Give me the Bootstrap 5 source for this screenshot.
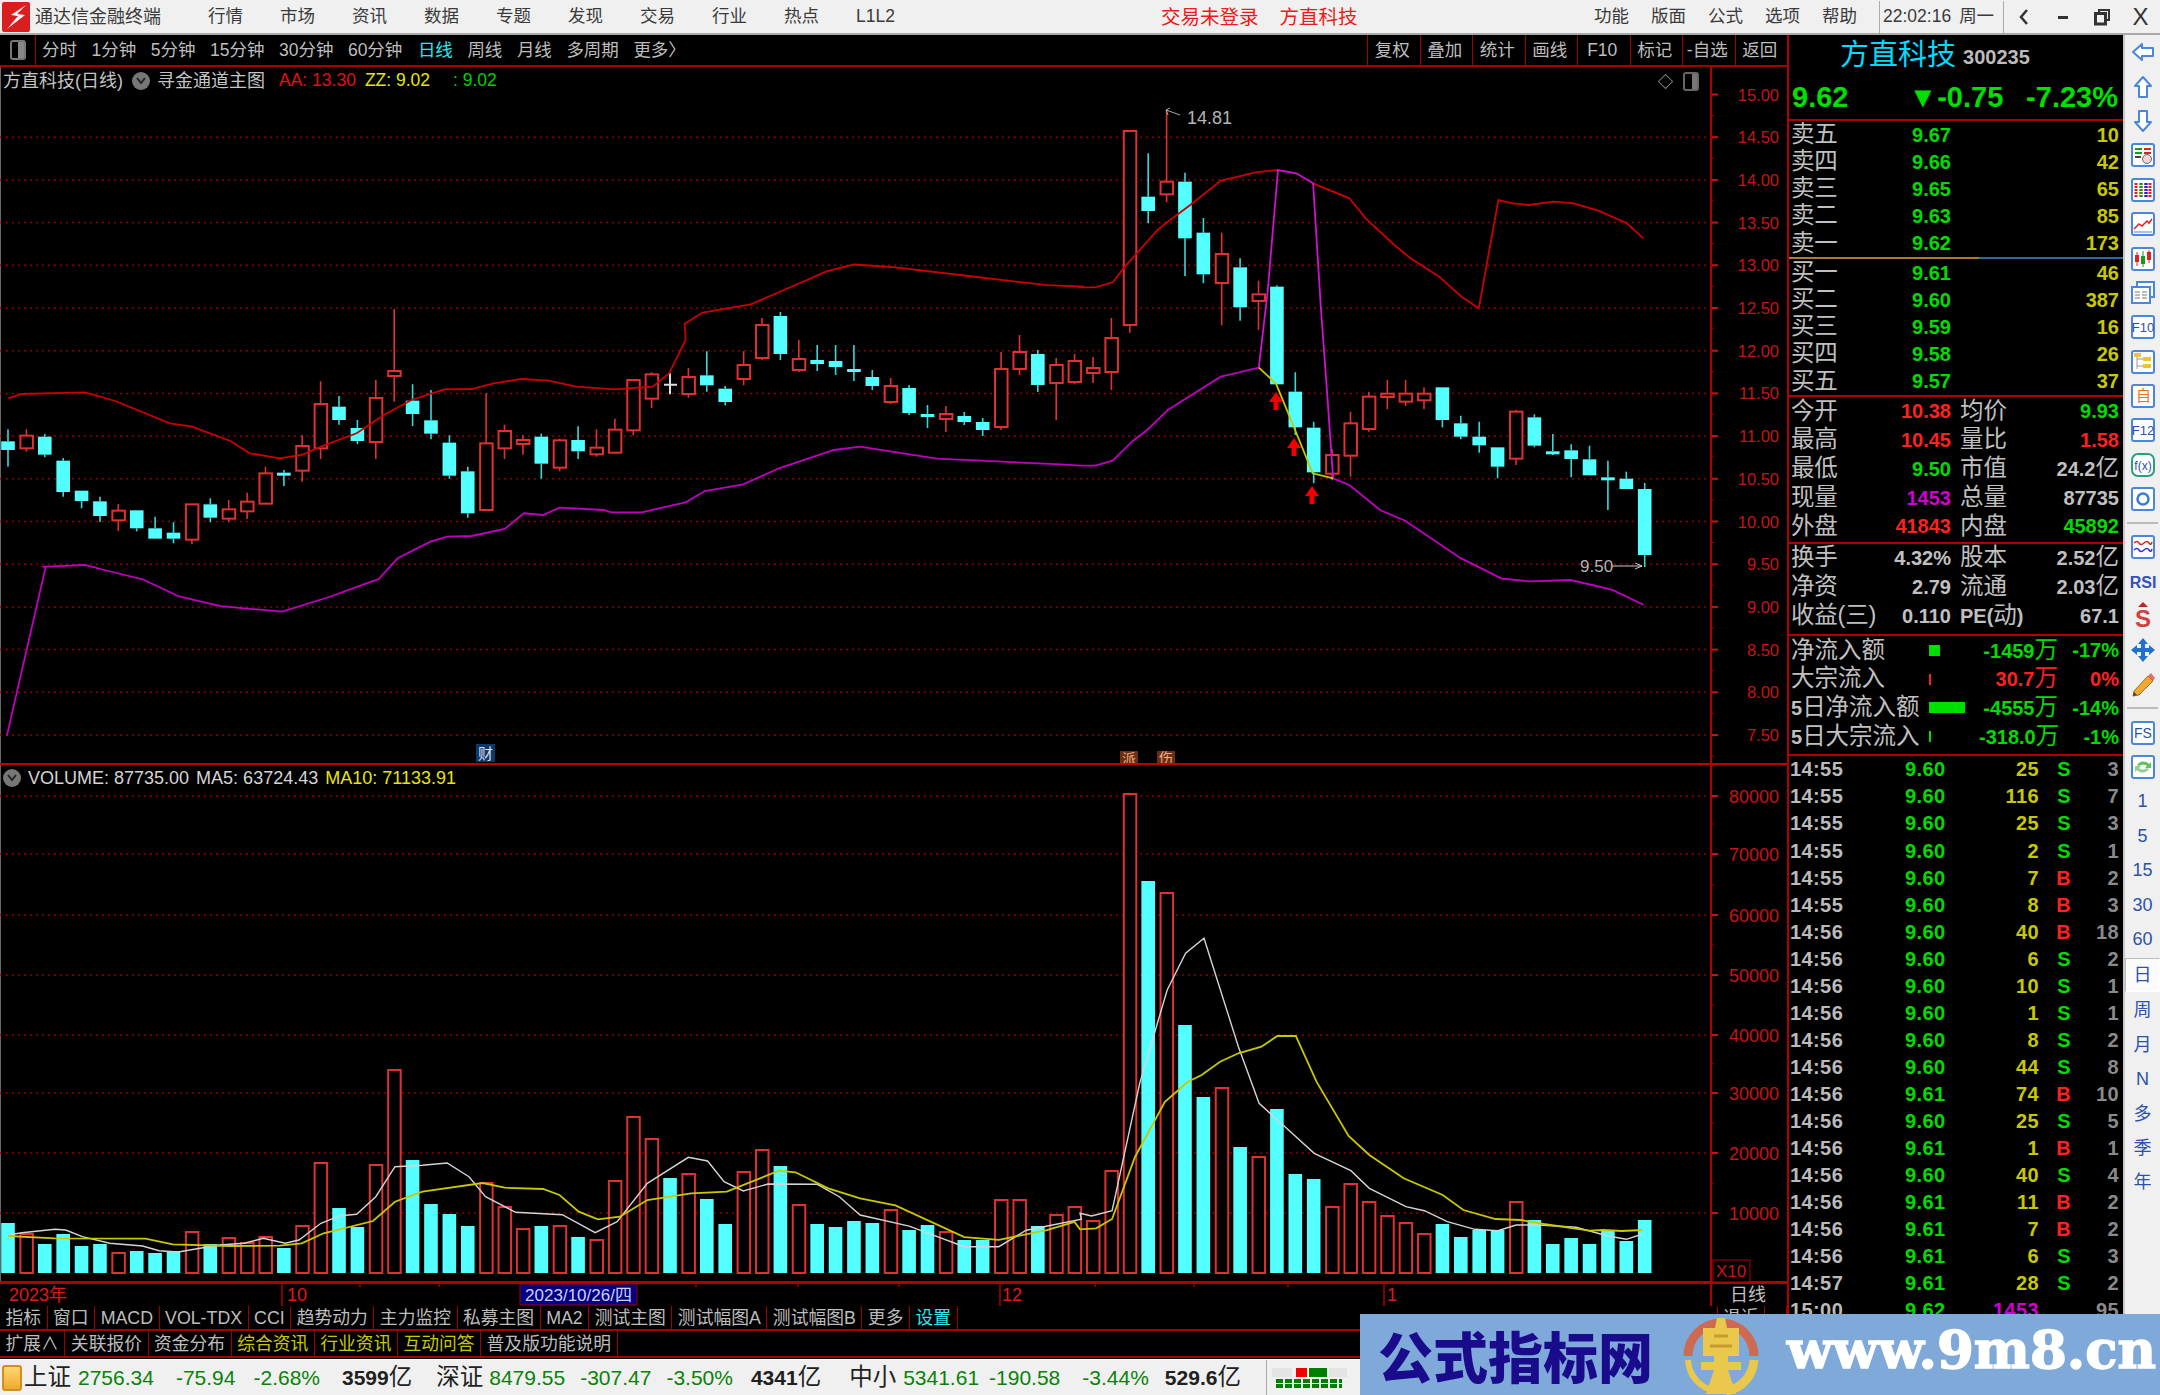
<!doctype html>
<html lang="zh-CN">
<head>
<meta charset="utf-8">
<title>通达信金融终端</title>
<link href="https://cdn.jsdelivr.net/npm/bootstrap@5.3.0/dist/css/bootstrap.min.css" rel="stylesheet">
<style>
  html, body { margin: 0; background: #000; overflow: hidden; }
  body { font-family: "Liberation Sans", "Noto Sans CJK SC", sans-serif; font-size: 17.5px; line-height: 1; }
  .screen { width: 2160px; height: 1395px; position: relative; overflow: hidden; }

  /* title bar */
  .titlebar { height: 35px; padding-top: 1px; background: #f0f0f0; border-bottom: 2px solid #a8a8a8; color: #3a3a3a; font-size: 17.5px; }
  .app-logo { width: 28px; height: 30px; margin: 0 5px 0 2px; }
  .app-name { width: 173px; font-size: 18px; }
  .menu-main span { width: 72px; }
  .menu-red { color: #f01818; position: absolute; left: 1161px; top: 8px; font-size: 19.5px; }
  .menu-red span + span { margin-left: 21px; }
  .menu-right { margin-left: auto; }
  .menu-right span { width: 57px; }
  .clock { border-left: 1px solid #aaa; border-right: 1px solid #aaa; height: 32px; width: 125px; padding-left: 3px; gap: 8px; }
  .win-btns { width: 156px; color: #333; }
  .win-btns span { width: 39px; display: flex; justify-content: center; }
  .win-x { font-size: 24px; }

  /* period bar */
  .leftcol { width: 1787px; }
  .periodbar { height: 32px; border-bottom: 2px solid #a00000; color: #bdbdbd; }
  .period-toggle { width: 36px; height: 30px; border-right: 1px solid #a00000; }
  .period-toggle i { display: block; width: 16px; height: 20px; border: 2px solid #777; border-radius: 3px; background: linear-gradient(90deg, #000 50%, #888 50%); }
  .period-items { gap: 14.5px; margin-left: 6px; padding-top: 1px; }
  .period-on { color: #2ee6f0; margin-left: 1px; }
  .period-btn { width: 52.5px; height: 30px; padding: 1px 3px 0 0; border-left: 1px solid #a00000; }

  /* chart */
  .chartwrap { position: relative; height: 1239px; }
  .chartwrap svg { display: block; }
  .legend { position: absolute; left: 3px; gap: 7px; color: #c4c4c4; white-space: nowrap; font-size: 18px; }
  .legend-price { top: 5px; }
  .legend-vol { top: 702px; color: #d4d4d4; }
  .dot { width: 18px; height: 18px; border-radius: 50%; background: #777; }
  .legend-price .dot { margin-left: 2px; }
  .t-red { color: #e01010; font-size: 17.5px; margin-left: 7px; }
  .t-yel { color: #e6e600; font-size: 17.5px; margin-left: 2px; }
  .t-grn { color: #00d000; font-size: 17.5px; margin-left: 16px; }
  .legend-vol .t-yel { font-size: 18px; margin-left: 0; }
  .pane-tools { position: absolute; top: 5px; left: 1660px; gap: 12px; color: #777; }
  .pane-tools b { display: block; width: 16px; height: 19px; border: 2px solid #666; border-radius: 3px; background: linear-gradient(90deg, #000 55%, #777 55%); }
  .diamond { width: 11px; height: 11px; margin-top: 4px; border: 1px solid #777; transform: rotate(45deg); }

  /* button rows */
  .btnrow { border-bottom: 2px solid #a00000; color: #bdbdbd; overflow: hidden; font-size: 17.8px; }
  .btnrow-a { height: 25px; }
  .btnrow-b { height: 27px; }
  .btnrow span { padding: 2px 5.5px 0; border-right: 1px solid #a00000; display: flex; align-items: center; white-space: nowrap; }
  .btnrow .cell-edge { border-left: 1px solid #a00000; }
  .c-yellow { color: #c8c800; }
  .c-cyan { color: #2ee6f0; }

  /* quote panel */
  .quote { width: 336px; height: 1324px; border-left: 2px solid #b00000; color: #c0c0c0; overflow: hidden; font-weight: 700; font-size: 20px; }
  .q-head { height: 86px; border-bottom: 2px solid #b00000; }
  .q-name { height: 48px; padding-left: 51px; padding-top: 6px; gap: 7px; font-weight: 400; }
  .q-name b { color: #00dcff; font-size: 29px; font-weight: 400; }
  .q-name i { font-style: normal; font-size: 20px; font-weight: 700; color: #bbb; padding-top: 6px; }
  .q-now { color: #00e000; font-size: 29px; padding: 0 5px 0 3px; }
  .q-now span:nth-child(2) { margin-left: 60px; }
  .q-now span:nth-child(3) { margin-left: auto; }
  .q-split { height: 2px; background: linear-gradient(90deg, #b07a28 57%, #2b6aa8 57%); }
  .q-rule { height: 1px; border-bottom: 2px solid #b00000; }
  .q-stats { border-bottom: 2px solid #b00000; }
  .pad-a { padding-bottom: 1px; }
  .pad-b { padding-bottom: 4px; }
  .pad-c { padding-bottom: 3px; }
  .qrow { display: flex; align-items: center; padding: 0 4px 0 2px; height: 27.2px; white-space: nowrap; }
  .qrow-tall { height: 28.75px; }
  .cj { font-weight: 400; font-size: 23.5px; }
  .q-lab { width: 80px; font-weight: 400; font-size: 23.5px; letter-spacing: -.2px; }
  .q-val { width: 80px; text-align: right; }
  .q-lab2 { margin-left: 9px; font-weight: 400; font-size: 23.5px; width: 60px; white-space: nowrap; }
  .q-lab2.q-pe { font-weight: 700; font-size: 20px; }
  .q-end { flex-grow: 1; text-align: right; }
  .g { color: #00dc00; } .y { color: #c8c800; } .r { color: #ff2020; } .p { color: #d000d0; } .w { color: #c0c0c0; }
  .f-lab { width: 138px; font-weight: 400; font-size: 23.5px; }
  .f-lab em { font-style: normal; font-weight: 700; font-size: 20px; }
  .f-bar { width: 50px; display: flex; align-items: center; }
  .f-bar i { display: block; height: 11px; }
  .f-val { width: 79px; text-align: right; }
  .tick { display: flex; align-items: center; height: 27.05px; padding: 0 4px 0 1px; white-space: nowrap; letter-spacing: .4px; }
  .tick-t { width: 115px; color: #bbb; }
  .tick-p { width: 50px; }
  .tick-v { width: 84px; text-align: right; }
  .tick-s { width: 32px; text-align: right; }
  .tick-n { flex-grow: 1; text-align: right; color: #8a8a8a; }

  /* tool strip */
  .toolstrip { width: 37px; height: 1324px; background: #f0f0f0; border-left: 2px solid #c8c8c8; color: #2c52a8; font-size: 17px; }
  .tool { height: 34.4px; display: flex; align-items: center; justify-content: center; }
  .tool svg { display: block; }
  .tool-sep { height: 2px; margin: 5.5px 2px 6px; background: #bbb; }
  .tool-on { background: #fbfbfb; border: 1px solid; border-color: #bbb #fff #fff #bbb; margin: 1.5px 0 1.5px; height: 34px; }
  .tool-cj { font-size: 18px; }

  /* status bar */
  .statusbar { height: 36px; background: #f0f0f0; border-top: 1px solid #fff; color: #202020; font-size: 21px; gap: 18px; padding-left: 2px; white-space: nowrap; }
  .st-icon { width: 20px; height: 26px; border: 2px solid #d09020; border-radius: 3px; background: linear-gradient(180deg, #ffd870, #f0a830); margin-right: -16px; }
  .st-name { font-size: 23.5px; margin-right: -11px; color: #222; }
  .st-g { color: #0a820a; }
  .st-v { font-weight: 700; margin-right: -18px; }
  .st-u { font-size: 23.5px; margin-right: 7px; }
  .st-mini { border-left: 1px solid #aaa; height: 36px; padding: 7px 0 0 5px; }
  .nudge-r4 { margin-left: 4px; }
  .nudge-r3 { margin-left: 3px; }
  .nudge-l1 { margin-left: -1px; }
  .nudge-l2 { margin-left: -2px; }
  .nudge-l3 { margin-left: -3px; }
  .nudge-l8 { margin-left: -8px; }

  /* site stamp lying over the corner */
  .stamp { position: absolute; left: 1360px; top: 1314px; width: 800px; height: 81px; background: #7fa9d8; }
  .stamp-cn { position: absolute; left: 18px; top: 5px; font-size: 55px; line-height: 70px; font-weight: 900; color: #1a0a8c; font-family: "Noto Sans CJK SC", sans-serif; white-space: nowrap; }
  .stamp-logo { position: absolute; left: 316px; top: 0; }
  .stamp-url { position: absolute; left: 427px; top: 4px; font-family: "DejaVu Serif", serif; font-weight: 700; font-size: 53px; line-height: 62px; color: #fff; -webkit-text-stroke: 1.5px #fff; white-space: nowrap; }
</style>
</head>
<body>
<div class="screen d-flex flex-column">

  <div class="titlebar d-flex align-items-center flex-shrink-0">
    <svg class="app-logo" viewBox="0 0 28 30"><rect width="28" height="30" rx="2" fill="#d81e1e"/><path d="M24 3 L9 13 L16 14 L5 27 L23 13 L15 12 Z" fill="#fff"/></svg>
    <span class="app-name">通达信金融终端</span>
    <div class="menu-main d-flex">
      <span>行情</span><span>市场</span><span>资讯</span><span>数据</span><span>专题</span><span>发现</span><span>交易</span><span>行业</span><span>热点</span><span>L1L2</span>
    </div>
    <div class="menu-red"><span>交易未登录</span><span>方直科技</span></div>
    <div class="menu-right d-flex">
      <span>功能</span><span>版面</span><span>公式</span><span>选项</span><span>帮助</span>
    </div>
    <div class="clock d-flex align-items-center"><span>22:02:16</span><span>周一</span></div>
    <div class="win-btns d-flex align-items-center">
      <span><svg width="12" height="18" viewBox="0 0 12 18"><path d="M9 2 L3 9 L9 16" fill="none" stroke="#333" stroke-width="2.500"/></svg></span>
      <span><svg width="12" height="18" viewBox="0 0 12 18"><rect x="1" y="8" width="10" height="3" fill="#333"/></svg></span>
      <span><svg width="16" height="18" viewBox="0 0 16 18"><path d="M5 5V2H15V12H12" fill="none" stroke="#333" stroke-width="2"/><rect x="1.500" y="5.500" width="10" height="10.500" fill="none" stroke="#333" stroke-width="3"/></svg></span>
      <span class="win-x">X</span>
    </div>
  </div>

  <div class="d-flex flex-shrink-0">
    <div class="leftcol flex-shrink-0">
      <div class="periodbar d-flex align-items-center">
        <div class="period-toggle d-flex align-items-center justify-content-center"><i></i></div>
        <div class="period-items d-flex">
          <span>分时</span><span>1分钟</span><span>5分钟</span><span>15分钟</span><span>30分钟</span><span>60分钟</span>
          <span class="period-on">日线</span><span>周线</span><span>月线</span><span>多周期</span><span>更多&#12297;</span>
        </div>
        <div class="ms-auto d-flex">
          <span class="period-btn d-flex align-items-center justify-content-center">复权</span>
          <span class="period-btn d-flex align-items-center justify-content-center">叠加</span>
          <span class="period-btn d-flex align-items-center justify-content-center">统计</span>
          <span class="period-btn d-flex align-items-center justify-content-center">画线</span>
          <span class="period-btn d-flex align-items-center justify-content-center">F10</span>
          <span class="period-btn d-flex align-items-center justify-content-center">标记</span>
          <span class="period-btn d-flex align-items-center justify-content-center">-自选</span>
          <span class="period-btn d-flex align-items-center justify-content-center">返回</span>
        </div>
      </div>

      <div class="chartwrap">
        <svg id="chart" width="1787" height="1239" viewBox="0 67 1787 1239"></svg>
        <div class="legend legend-price d-flex align-items-center">
          <span>方直科技(日线)</span>
          <span class="dot d-flex align-items-center justify-content-center"><svg width="10" height="8" viewBox="0 0 10 8"><path d="M1 1 L5 6 L9 1" fill="none" stroke="#222" stroke-width="2"/></svg></span>
          <span>寻金通道主图</span>
          <span class="t-red">AA: 13.30</span>
          <span class="t-yel">ZZ: 9.02</span>
          <span class="t-grn">: 9.02</span>
        </div>
        <div class="pane-tools d-flex"><span class="diamond"></span><b></b></div>
        <div class="legend legend-vol d-flex align-items-center">
          <span class="dot d-flex align-items-center justify-content-center"><svg width="10" height="8" viewBox="0 0 10 8"><path d="M1 1 L5 6 L9 1" fill="none" stroke="#222" stroke-width="2"/></svg></span>
          <span>VOLUME: 87735.00</span>
          <span>MA5: 63724.43</span>
          <span class="t-yel">MA10: 71133.91</span>
        </div>
      </div>

      <div class="btnrow btnrow-a d-flex">
        <span>指标</span><span>窗口</span><span>MACD</span><span>VOL-TDX</span><span>CCI</span><span>趋势动力</span><span>主力监控</span><span>私募主图</span><span>MA2</span><span>测试主图</span><span>测试幅图A</span><span>测试幅图B</span><span>更多</span><span class="c-cyan">设置</span>
        <span class="ms-auto cell-edge">退近</span><span>&nbsp;&nbsp;</span>
      </div>
      <div class="btnrow btnrow-b d-flex">
        <span>扩展&#8743;</span><span>关联报价</span><span>资金分布</span><span class="c-yellow">综合资讯</span><span class="c-yellow">行业资讯</span><span class="c-yellow">互动问答</span><span>普及版功能说明</span>
      </div>
    </div>

    <div class="quote flex-shrink-0">
      <div class="q-head">
        <div class="q-name d-flex align-items-start"><b>方直科技</b><i>300235</i></div>
        <div class="q-now d-flex"><span>9.62</span><span>&#9660;-0.75</span><span>-7.23%</span></div>
      </div>
      <div id="book"></div>
      <div class="q-stats pad-a">
        <div class="qrow qrow-tall"><span class="q-lab">今开</span><span class="q-val r">10.38</span><span class="q-lab2">均价</span><span class="q-end g">9.93</span></div>
        <div class="qrow qrow-tall"><span class="q-lab">最高</span><span class="q-val r">10.45</span><span class="q-lab2">量比</span><span class="q-end r">1.58</span></div>
        <div class="qrow qrow-tall"><span class="q-lab">最低</span><span class="q-val g">9.50</span><span class="q-lab2">市值</span><span class="q-end w">24.2<span class="cj">亿</span></span></div>
        <div class="qrow qrow-tall"><span class="q-lab">现量</span><span class="q-val p">1453</span><span class="q-lab2">总量</span><span class="q-end w">87735</span></div>
        <div class="qrow qrow-tall"><span class="q-lab">外盘</span><span class="q-val r">41843</span><span class="q-lab2">内盘</span><span class="q-end g">45892</span></div>
      </div>
      <div class="q-stats pad-b">
        <div class="qrow qrow-tall"><span class="q-lab">换手</span><span class="q-val">4.32%</span><span class="q-lab2">股本</span><span class="q-end">2.52<span class="cj">亿</span></span></div>
        <div class="qrow qrow-tall"><span class="q-lab">净资</span><span class="q-val">2.79</span><span class="q-lab2">流通</span><span class="q-end">2.03<span class="cj">亿</span></span></div>
        <div class="qrow qrow-tall"><span class="q-lab">收益(三)</span><span class="q-val">0.110</span><span class="q-lab2 q-pe">PE(<span class="cj">动</span>)</span><span class="q-end">67.1</span></div>
      </div>
      <div class="q-stats pad-c" id="flows"></div>
      <div id="ticks"></div>
    </div>

    <div class="toolstrip flex-shrink-0" id="tools"></div>
  </div>

  <div class="statusbar d-flex align-items-center flex-shrink-0">
    <span class="st-icon"></span>
    <span class="st-name">上证</span><span class="st-g">2756.34</span><span class="st-g nudge-r4">-75.94</span><span class="st-g">-2.68%</span><span class="st-v nudge-r4">3599</span><span class="st-u">亿</span>
    <span class="st-name nudge-l1">深证</span><span class="st-g nudge-l1">8479.55</span><span class="st-g nudge-l3">-307.47</span><span class="st-g nudge-l3">-3.50%</span><span class="st-v">4341</span><span class="st-u">亿</span>
    <span class="st-name nudge-r3">中小</span><span class="st-g">5341.61</span><span class="st-g nudge-l8">-190.58</span><span class="st-g nudge-r4">-3.44%</span><span class="st-v nudge-l2">529.6</span><span class="st-u">亿</span>
    <div class="st-mini">
      <svg width="92" height="22" viewBox="0 0 92 22">
        <rect x="0" y="0" width="20" height="9" fill="#e4e4e4"/><rect x="24" y="0" width="11" height="9" fill="#f00000"/><rect x="37" y="0" width="18" height="9" fill="#008000"/><rect x="57" y="0" width="18" height="9" fill="#e4e4e4"/>
        <path d="M4 13h66M4 18h66" stroke="#008000" stroke-width="4" stroke-dasharray="7 2"/>
      </svg>
    </div>
  </div>

  <div class="stamp">
    <div class="stamp-cn">公式指标网</div>
    <svg class="stamp-logo" width="90" height="81" viewBox="0 0 90 81">
      <path d="M12 42 A33 33 0 0 1 78 42" fill="none" stroke="#cf6a52" stroke-width="9"/>
      <path d="M12 46 A33 33 0 0 0 40 77" fill="none" stroke="#e9c84c" stroke-width="6"/>
      <path d="M78 46 A33 33 0 0 1 50 77" fill="none" stroke="#e9c84c" stroke-width="9"/>
      <path d="M41 4h8l2 10h12v28H52v6h13v8H52l8 24H30l8-24H25v-8h13v-6H27V14h12z" fill="#e9c84c"/>
      <path d="M38 22h14M34 32h22" stroke="#c89a30" stroke-width="3"/>
    </svg>
    <div class="stamp-url">www.9m8.cn</div>
  </div>
</div>

<script>
  // book rows
  const sells = [['卖五','9.67',10],['卖四','9.66',42],['卖三','9.65',65],['卖二','9.63',85],['卖一','9.62',173]];
  const buys = [['买一','9.61',46],['买二','9.60',387],['买三','9.59',16],['买四','9.58',26],['买五','9.57',37]];
  const bookRow = r => `<div class="qrow"><span class="q-lab">${r[0]}</span><span class="q-val g">${r[1]}</span><span class="q-end y">${r[2]}</span></div>`;
  document.querySelector('#book').innerHTML =
    sells.map(bookRow).join('') + '<div class="q-split"></div>' +
    buys.map(bookRow).join('') + '<div class="q-rule"></div>';

  // money flow rows
  const flows = [
    ['净流入额', 11, '#00e000', '-1459', '-17%', 'g'],
    ['大宗流入', 2, '#ff2020', '30.7', '0%', 'r'],
    ['<em>5</em>日净流入额', 36, '#00e000', '-4555', '-14%', 'g'],
    ['<em>5</em>日大宗流入', 2, '#00e000', '-318.0', '-1%', 'g']
  ];
  document.querySelector('#flows').innerHTML = flows.map(f =>
    `<div class="qrow qrow-tall"><span class="f-lab">${f[0]}</span><span class="f-bar"><i style="width:${f[1]}px;background:${f[2]}"></i></span>` +
    `<span class="f-val ${f[5]}">${f[3]}<span class="cj">万</span></span><span class="q-end ${f[5]}">${f[4]}</span></div>`).join('');

  // tick list
  const ticks = [
    ['14:55','9.60',25,'S',3],['14:55','9.60',116,'S',7],['14:55','9.60',25,'S',3],['14:55','9.60',2,'S',1],
    ['14:55','9.60',7,'B',2],['14:55','9.60',8,'B',3],['14:56','9.60',40,'B',18],['14:56','9.60',6,'S',2],
    ['14:56','9.60',10,'S',1],['14:56','9.60',1,'S',1],['14:56','9.60',8,'S',2],['14:56','9.60',44,'S',8],
    ['14:56','9.61',74,'B',10],['14:56','9.60',25,'S',5],['14:56','9.61',1,'B',1],['14:56','9.60',40,'S',4],
    ['14:56','9.61',11,'B',2],['14:56','9.61',7,'B',2],['14:56','9.61',6,'S',3],['14:57','9.61',28,'S',2],
    ['15:00','9.62',1453,'',95]
  ];
  document.querySelector('#ticks').innerHTML = ticks.map(t =>
    `<div class="tick"><span class="tick-t">${t[0]}</span><span class="tick-p g">${t[1]}</span>` +
    `<span class="tick-v ${t[3] ? 'y' : 'p'}">${t[2]}</span><span class="tick-s ${t[3] == 'B' ? 'r' : 'g'}">${t[3]}</span><span class="tick-n">${t[4]}</span></div>`).join('');

  // tool strip icons
  const box = inner => `<svg width="24" height="24" viewBox="0 0 24 24"><rect x="1" y="1" width="22" height="22" rx="2" fill="#fff" stroke="#4a86dc" stroke-width="2"/>${inner}</svg>`;
  const arrow = d => `<svg width="24" height="24" viewBox="0 0 24 24"><path d="${d}" fill="#fff" stroke="#4a86dc" stroke-width="2" stroke-linejoin="round"/></svg>`;
  const label = (t, c, s) => `<text x="12" y="17" text-anchor="middle" font-family="Liberation Sans" font-size="${s || 14}" fill="${c || '#2c52a8'}">${t}</text>`;
  const tools = [
    arrow('M2 12 L11 4 V8 H22 V16 H11 V20 Z'),
    arrow('M12 2 L20 11 H16 V22 H8 V11 H4 Z'),
    arrow('M12 22 L20 13 H16 V2 H8 V13 H4 Z'),
    box('<path d="M4 6h7M4 10h7" stroke="#1a9a1a" stroke-width="2"/><path d="M13 6h7M13 10h7" stroke="#e02020" stroke-width="2"/><path d="M4 14h6" stroke="#444" stroke-width="2"/><circle cx="16" cy="16" r="4.5" fill="#ddd" stroke="#666"/>'),
    box('<path d="M5 5v14M10 5v14M15 5v14M19 5v14" stroke-dasharray="2 1" stroke-width="3" fill="none" stroke="#e02020"/><path d="M10 5v14" stroke-dasharray="2 1" stroke-width="3" stroke="#1a9a1a"/><path d="M15 5v14" stroke-dasharray="2 1" stroke-width="3" stroke="#2020e0"/>'),
    box('<path d="M3 17 L8 12 L11 14 L16 9 L18 11 L21 7" fill="none" stroke="#e02020" stroke-width="1.5"/><path d="M3 20h18" stroke="#4a86dc"/>'),
    box('<path d="M6 5v14" stroke="#e02020"/><rect x="4" y="8" width="4" height="7" fill="#e02020"/><path d="M12 4v16" stroke="#1a9a1a"/><rect x="10" y="9" width="4" height="8" fill="#1a9a1a"/><path d="M18 3v13" stroke="#e02020"/><rect x="16" y="5" width="4" height="8" fill="#e02020"/>'),
    '<svg width="24" height="24" viewBox="0 0 24 24"><rect x="6" y="1" width="17" height="15" fill="#fff" stroke="#4a86dc" stroke-width="2"/><rect x="1" y="6" width="18" height="16" fill="#fff" stroke="#4a86dc" stroke-width="2"/><path d="M4 11h5M11 11h5M4 14h5M11 14h5M4 17h5M11 17h5" stroke="#777"/></svg>',
    box(label('F10', '#2c52a8', 13)),
    box('<path d="M6 5v14M6 9h8M6 16h8" stroke="#999" fill="none"/><rect x="3" y="3" width="7" height="4" fill="#f0c040"/><rect x="12" y="7" width="8" height="4" fill="#f0c040"/><rect x="12" y="14" width="8" height="4" fill="#f0c040"/>'),
    box(label('自', '#f07020', 15)),
    box(label('F12', '#2c52a8', 13)),
    `<svg width="24" height="24" viewBox="0 0 24 24"><rect x="1" y="1" width="22" height="22" rx="6" fill="#fff" stroke="#2aa080" stroke-width="2"/>${label('f(x)', '#2c52a8', 12)}</svg>`,
    box('<circle cx="12" cy="12" r="5.5" fill="none" stroke="#3a7ad8" stroke-width="2.5"/>'),
    'sep',
    box('<path d="M3 8q3-3 5 0t5 0 5 0 3-1" fill="none" stroke="#e02020" stroke-width="1.5"/><path d="M3 15q3-3 5 0t5 0 5 0 3-1" fill="none" stroke="#3030e0" stroke-width="1.5"/>'),
    `<svg width="30" height="20" viewBox="0 0 30 20"><text x="15" y="16" text-anchor="middle" font-family="Liberation Sans" font-weight="700" font-size="16" fill="#3050c0">RSI</text></svg>`,
    `<svg width="24" height="30" viewBox="0 0 24 30"><path d="M12 1 L17 6 H7 Z" fill="#c02020"/><text x="12" y="26" text-anchor="middle" font-family="Liberation Sans" font-weight="700" font-size="24" fill="#d04040">S</text></svg>`,
    '<svg width="26" height="26" viewBox="0 0 26 26"><path d="M13 1 L18 7 H15 V11 H19 V8 L25 13 L19 18 V15 H15 V19 H18 L13 25 L8 19 H11 V15 H7 V18 L1 13 L7 8 V11 H11 V7 H8 Z" fill="#2070d0"/></svg>',
    '<svg width="26" height="26" viewBox="0 0 26 26"><path d="M4 19 L18 4 L23 9 L9 23 L3 24 Z" fill="#f0a830" stroke="#a07020"/><path d="M18 4 L21 1 L25 6 L23 9 Z" fill="#e07070"/><path d="M3 24 L4 20 L7 23 Z" fill="#444"/></svg>',
    'sep',
    box(label('FS', '#2c52a8', 14)),
    box('<path d="M6 10a7 6 0 0 1 12-1l2-2v6h-6l2-2a5 4 0 0 0-8 0z" fill="#60c060"/><path d="M18 14a7 6 0 0 1-12 1l-2 2v-6h6l-2 2a5 4 0 0 0 8 0z" fill="#90d090"/>'),
    '1','5','15','30','60','日','周','月','N','多','季','年'
  ];
  document.querySelector('#tools').innerHTML = tools.map(t => {
    if (t == 'sep') return '<div class="tool-sep"></div>';
    if (t == '日') return `<div class="tool tool-on tool-cj">${t}</div>`;
    return `<div class="tool${t.length < 3 ? ' tool-cj' : ''}">${t}</div>`;
  }).join('');

  // ---- chart ----
  const X = i => 8 + i * 18.39;
  const PY = p => 94.5 + (15 - p) * 85.4;
  const crop = (pts, ox, oy, sx) => pts.map(p => [p[0] / sx + ox, p[1] / 3 + oy]);
  const fromA = pts => crop(pts, 0, 340, 1.823);
  const fromB = pts => crop(pts, 1080, 90, 2.45);
  const fromC = pts => crop(pts, 0, 1080, 1.823);
  const fromD = pts => crop(pts, 1080, 780, 2.178);
  const shr = pts => pts.map(p => [p[0] * 1.3776, p[1] * 1.3776]);

  // [up?, high, top, bottom, low]
  const zA = v => [v[0], v[1]/3+340, v[2]/3+340, v[3]/3+340, v[4]/3+340];
  const zB = v => [v[0], v[1]/3+90, v[2]/3+90, v[3]/3+90, v[4]/3+90];
  const bars = [
    [0,268,304,330,380],[1,268,287,325,335],[0,282,290,344,352],[0,354,362,456,470],[0,452,452,483,505],[0,470,484,528,546],
    [1,492,512,541,573],[0,511,511,565,574],[0,530,565,596,596],[0,547,578,596,610],[1,493,493,599,613],[0,475,493,533,547],
    [1,480,508,536,547],[1,458,485,514,537],[1,380,400,491,491],[0,390,398,406,438],[1,286,318,392,425],[1,124,192,325,357],
    [0,168,200,240,254],[0,240,264,303,313],[1,120,174,306,357],[1,-93,93,108,185],[0,133,182,222,258],[0,150,241,281,298],
    [0,286,308,407,416],[0,380,394,520,533],[1,160,310,510,510],[1,254,273,325,357],[1,286,300,312,344],[0,281,290,371,416],
    [1,296,301,383,394],[0,259,300,334,357],[1,268,323,343,350],[1,236,269,338,338],[1,120,120,271,286],[1,97,103,176,204],
    [2,100,134,136,163],[1,84,111,162,173],[0,34,106,136,155],[0,138,146,186,196],[1,34,75,117,136]
  ].map(zA).concat([
    [1,318,325,358,360],[0,312,316,354,360],[1,340,359,370,372],[0,345,360,364,371],[0,345,361,367,375],[0,345,369,372,381],
    [0,370,377,386,390],[1,378,386,402,404],[0,385,388,413,415],[0,405,414,417,428],[1,406,414,419,432],[0,412,416,422,425],
    [0,418,422,430,436],[1,352,369,427,430],[1,335,352,369,375],[0,350,354,385,392],[1,358,365,383,420],[1,354,361,382,384],
    [1,357,368,373,383],[1,318,338,372,390]
  ]).concat([
    [1,123,123,705,728],[0,190,320,363,400],[1,60,275,313,337],[0,248,275,445,558],[0,384,428,553,580],[1,428,492,579,706],
    [0,505,532,652,692],[1,572,613,633,719],[0,586,590,883,883],[0,847,905,1012,1035],[0,995,1013,1147,1180],[1,1078,1095,1151,1170],
    [1,965,1000,1097,1160],[1,905,920,1017,1025],[1,870,911,921,958],[1,870,911,935,948],[1,892,911,931,958],[0,892,892,990,1012],
    [0,977,1000,1040,1048],[0,995,1040,1066,1088],[0,1072,1072,1130,1165],[1,960,965,1106,1125],[0,973,982,1067,1072],[0,1032,1084,1088,1095],
    [0,1063,1081,1107,1162],[0,1067,1108,1156,1156],[0,1112,1162,1168,1260],[0,1145,1166,1197,1197]
  ].map(zB)).concat([[0,483,489,555,567]]);

  // volume tops
  const volTop = [1223,1234,1244,1234,1246,1244,1253,1251,1253,1251,1232,1244,1238,1243,1237,1248,1226,1163,1208,1227,1165,1070,1160,1204,1214,1226,1183,1207,1229,1226,1226,1237,1240,1181,1117,1139,1178,1174,1199,1224,1172,1150,1166,1205,1224,1227,1221,
    1223,1210,1230,1225,1232,1240,1240,1200,1200,1226,1215,1207,1221,1171,794,881,893,1025,1097,1088,1147,1157,1109,1174,1179,1207,1184,1202,1216,1223,1234,1224,1237,1230,1230,1202,1220,1244,1238,1244,1230,1241,1220];

  const upper = fromA([[15,175],[40,162],[155,157],[210,183],[310,250],[350,260],[420,303],[455,340],[510,355],[550,345],[585,320],[650,280],[700,225],[750,180],[810,148],[860,147],[900,130],[950,117],[1000,122],[1050,140],[1120,148],[1190,140],[1220,100],[1250,0]])
    .concat(shr([[497,235],[510,227],[545,221],[575,208],[600,197],[620,192],[650,194],[700,200],[760,207],[785,208]]))
    .concat(fromB([[0,592],[38,592],[80,577],[110,530],[190,420],[215,395],[270,345],[345,272],[380,262],[430,247],[485,240]]));
  const upperTail = fromB([[571,280],[660,325],[700,385],[770,465],[810,505],[880,560],[935,620],[977,655],[1025,330],[1060,340],[1100,345],[1160,335],[1210,340],[1270,362],[1340,400],[1380,445]]);
  const lower = shr([[5,534],[33,412]])
    .concat(fromA([[80,680],[155,675],[190,690],[260,718]]))
    .concat(shr([[130,433],[160,440],[205,444],[240,433],[270,422]]))
    .concat(fromA([[690,718],[725,655],[785,605],[815,590],[860,588],[920,567],[955,520],[990,525],[1020,503],[1100,510],[1115,517],[1170,517],[1250,487],[1285,453],[1355,433],[1420,385],[1520,330],[1568,320]]))
    .concat(shr([[680,333],[770,337]]))
    .concat(fromB([[0,1127],[38,1127],[80,1112],[130,1052],[165,1020],[215,960],[345,860],[380,850],[438,833]]));
  const hump = fromB([[438,833],[460,600],[485,240],[530,250],[571,280],[590,650],[605,900],[620,1165]]);
  const dip = fromB([[438,833],[480,880],[527,1020],[570,1150],[620,1165]]);
  const lowerTail = fromB([[620,1165],[660,1185],[735,1260]]).concat(shr([[1020,378],[1060,405],[1090,420],[1110,422],[1140,421],[1170,428],[1193,439]]));

  const ma5 = fromC([[15,465],[40,458],[100,448],[120,450],[150,470],[200,490],[260,498],[290,512],[325,516],[370,503],[400,495],[445,490],[480,475],[520,490],[545,480],[585,430],[620,407],[650,403],[685,350],[720,260],[770,256],[815,249],[855,290],[885,350],[940,397],[1025,404],[1085,458],[1125,425],[1180,310],[1255,232],[1290,243],[1320,305],[1355,333],[1400,312],[1490,313],[1530,350],[1568,405]])
    .concat(shr([[660,890],[700,905],[725,905],[745,893],[785,885]]))
    .concat(fromD([[0,1300],[25,1308],[70,1292],[130,910],[190,630],[230,520],[270,475],[345,800],[390,970],[450,1045],[510,1120],[590,1172],[630,1225],[710,1280],[750,1292],[800,1325],[860,1348],[910,1352],[950,1335],[1000,1335],[1080,1342],[1150,1368],[1190,1378],[1225,1362]]));
  const ma10 = fromC([[15,468],[100,475],[265,476],[315,493],[420,498],[510,497],[550,490],[590,460],[680,423],[720,365],[770,335],[880,309],[920,323],[990,327],[1020,345],[1055,395],[1090,418],[1130,410],[1180,360],[1260,340],[1325,335],[1420,272],[1450,277],[1510,325],[1568,355]])
    .concat(shr([[650,875],[700,898],[725,900],[760,893],[780,887]]))
    .concat(fromD([[0,1348],[35,1345],[70,1317],[120,1130],[185,965],[235,905],[265,885],[305,845],[345,820],[395,800],[430,768],[470,768],[515,905],[585,1068],[630,1125],[705,1195],[790,1245],[835,1290],[905,1317],[960,1320],[1010,1332],[1110,1352],[1140,1350],[1180,1353],[1225,1350]]));

  const line = (pts, c, w) => `<polyline points="${pts.map(p => p[0].toFixed(1) + ',' + p[1].toFixed(1)).join(' ')}" fill="none" stroke="${c}" stroke-width="${w}"/>`;
  const txt = (x, y, s, c, size, anchor) => `<text x="${x}" y="${y}" fill="${c}" font-size="${size || 18}" text-anchor="${anchor || 'start'}" font-family="Liberation Sans, Noto Sans CJK SC, sans-serif">${s}</text>`;
  const RED = '#e03030', CYAN = '#54ffff', AXIS = '#c81414', GRID = '#8c0000', FRAME = '#a80000';
  let s = '';

  // left edge and grid
  s += `<rect x="0" y="66" width="1" height="1216" fill="#666"/>`;
  for (let p = 14.5; p >= 7.5; p -= .5)
    s += `<path d="M0 ${PY(p)}H1710" stroke="${GRID}" stroke-width="1.5" stroke-dasharray="2 4"/>`;
  for (let v = 1; v <= 8; v++) {
    const y = [1213, 1153, 1093, 1035, 975, 915, 854, 796][v - 1];
    s += `<path d="M0 ${y}H1710" stroke="${GRID}" stroke-width="1.5" stroke-dasharray="2 4"/>`;
    s += `<path d="M1710 ${y}h8" stroke="${AXIS}" stroke-width="2"/>`;
    s += `<path d="M1710 ${y - 30}h4" stroke="${FRAME}"/>`;
    s += txt(1779, y + 7, v * 10000, AXIS, 18, 'end');
  }

  // price axis
  for (let p = 15; p >= 7.5; p -= .5) {
    s += `<path d="M1710 ${PY(p)}h8" stroke="${AXIS}" stroke-width="2"/><path d="M1710 ${PY(p) + 21}h4" stroke="${FRAME}"/>`;
    s += txt(1779, PY(p) + 6, p.toFixed(2), AXIS, 16.5, 'end');
  }

  // candles
  bars.forEach((b, i) => {
    const x = X(i).toFixed(1), top = b[2], bot = b[3];
    if (b[0] == 2) {
      s += `<path d="M${x} ${b[1]}V${b[4]}M${X(i) - 6} ${top}h13" stroke="#ddd" stroke-width="2"/>`;
      return;
    }
    const c = b[0] ? RED : '#38d8d8';
    s += `<path d="M${x} ${b[1]}V${top}M${x} ${bot}V${b[4]}" stroke="${c}" stroke-width="1.6"/>`;
    s += b[0]
      ? `<rect x="${X(i) - 6}" y="${top}" width="12.5" height="${bot - top}" fill="#000" stroke="${RED}" stroke-width="2"/>`
      : `<rect x="${X(i) - 6.8}" y="${top}" width="13.6" height="${Math.max(bot - top, 3)}" fill="${CYAN}"/>`;
  });

  // bands
  s += line(upper, '#cc0000', 1.8) + line(upperTail, '#cc0000', 1.8);
  s += line(lower, '#c000c0', 1.8) + line(lowerTail, '#c000c0', 1.8);
  s += line(hump, '#d010d0', 1.8) + line(dip, '#c8c800', 1.8);

  // signal arrows
  [[1276, 392], [1294, 438], [1312, 486]].forEach(a => {
    s += `<path d="M${a[0]} ${a[1]}l7 10h-4.500v8h-5v-8h-4.500z" fill="#f00000"/>`;
  });

  // high / low notes
  s += `<path d="M1166 110l14 5M1166 110l4-2M1166 110l2 5" stroke="#aaa" fill="none"/>` + txt(1187, 124, '14.81', '#b4b4b4', 18);
  s += txt(1580, 572, '9.50', '#b4b4b4', 17) + `<path d="M1612 566h30m-7-3l7 3l-7 3" stroke="#ccc" fill="none"/>`;

  // tags under the price pane
  s += `<rect x="476" y="744" width="19" height="18" fill="#0c3a68"/>` + txt(485.500, 759, '财', '#dde', 15, 'middle');
  s += `<rect x="1120" y="751" width="18" height="12" fill="#6e2c10"/>` + txt(1129, 763, '派', '#e8b090', 14, 'middle');
  s += `<rect x="1157" y="751" width="18" height="12" fill="#6e2c10"/>` + txt(1166, 763, '伤', '#e8b090', 14, 'middle');

  // volume bars
  volTop.forEach((t, i) => {
    s += bars[i][0] == 1
      ? `<rect x="${X(i) - 6}" y="${t}" width="12.5" height="${1273 - t}" fill="#000" stroke="${RED}" stroke-width="2"/>`
      : `<rect x="${X(i) - 6.8}" y="${t}" width="13.6" height="${1273 - t}" fill="${CYAN}"/>`;
  });
  s += line(ma5, '#d4d4d4', 1.4) + line(ma10, '#c8c800', 1.8);

  // frame lines
  s += `<rect x="0" y="763" width="1787" height="2" fill="#c00000"/>`;
  s += `<rect x="1710" y="66" width="2" height="1240" fill="#b00000"/>`;
  s += `<rect x="0" y="1281" width="1787" height="3" fill="#b00000"/>`;
  s += `<rect x="1713" y="1260" width="37" height="22" fill="#000" stroke="#b00000"/>` + txt(1716, 1277, 'X10', AXIS, 17);

  // time axis
  [360, 439, 598, 696, 798, 899, 1095, 1194, 1288].forEach(x => { s += `<path d="M${x} 1283v4" stroke="${FRAME}" stroke-width="1.500"/>`; });
  [282, 1000, 1384].forEach(x => { s += `<path d="M${x} 1283V1306" stroke="${FRAME}" stroke-width="1.500"/>`; });
  s += txt(9, 1301, '2023年', '#e01818', 18) + txt(287, 1301, '10', '#e01818', 18);
  s += txt(1002, 1301, '12', '#e01818', 18) + txt(1387, 1301, '1', '#e01818', 18);
  s += `<rect x="520" y="1284" width="117" height="21" fill="#000080" stroke="#a00000"/>` + txt(578.500, 1301, '2023/10/26/四', '#d0d0ff', 17, 'middle');
  s += txt(1748, 1301, '日线', '#c0c0c0', 18, 'middle');

  document.querySelector('#chart').innerHTML = s;
</script>
<script src="https://cdn.jsdelivr.net/npm/bootstrap@5.3.0/dist/js/bootstrap.bundle.min.js"></script>
</body>
</html>
